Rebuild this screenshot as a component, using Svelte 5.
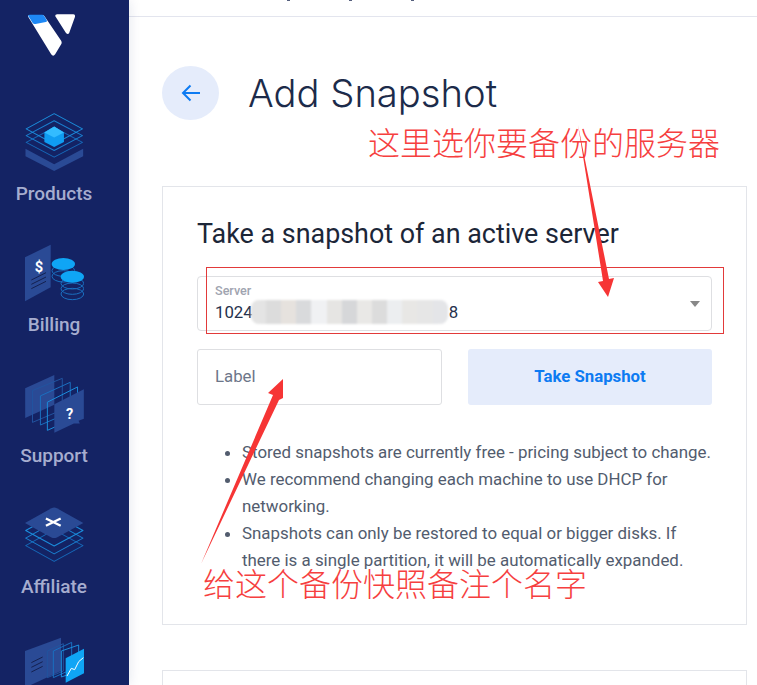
<script>
	const blurBlocks = [
		'#e4e4e4', '#dcdcdc', '#e6e2de', '#d9dadc', '#f0f1f3', '#e6e5e3',
		'#d6d7d9', '#e9e8e6', '#dcdcdc', '#eceef0', '#e8e7e5', '#e6e6e6', '#e4e5e8'
	];

	const notes = [
		'Stored snapshots are currently free - pricing subject to change.',
		'We recommend changing each machine to use DHCP for networking.',
		'Snapshots can only be restored to equal or bigger disks. If there is a single partition, it will be automatically expanded.'
	];
</script>

<div class="app">
	<aside class="sidebar">
		<svg class="logo" viewBox="85 42 140 126" aria-hidden="true">
			<path d="M85 50 Q84 45 90 45 L128 45 Q132 45 134 49 L184 122 Q187 128 184 133 L166 163 Q160 171 154 163 Z" fill="#fff" />
			<path d="M85 47 Q85 44 90 44 L127 44 Q131 44 133 48 L141 61 Q143 66 138 66 L107 72 Q102 73 99 70 Z" fill="#1e88f5" />
			<path d="M166 48 Q166 43 172 43 L220 43 Q228 44 225 52 L208 99 Q204 105 198 98 Z" fill="#fff" />
		</svg>

		<nav>
			<a class="item" href="#products">
				<svg viewBox="78 338 172 172" aria-hidden="true">
					<path d="M78 444 L163 490 L249 444 L249 466 L163 510 L78 466 Z" fill="#2a4a95" />
					<g fill="none" stroke-width="3" stroke-linejoin="round">
						<path d="M80 425 L163 381 L247 425 L163 469 Z" stroke="#1668b8" />
						<path d="M80 405 L163 361 L247 405 L163 449 Z" stroke="#1a7fd0" />
						<path d="M80 385 L163 340 L247 385 L163 430 Z" stroke="#1b8ddc" />
					</g>
					<path d="M134 396 L163 378 L192 396 L192 424 L163 439 L134 424 Z" fill="#0f9df2" />
					<path d="M134 396 L163 378 L192 396 L163 411 Z" fill="#33bcff" />
				</svg>
				<span>Products</span>
			</a>

			<a class="item" href="#billing">
				<svg viewBox="75 732 177 170" aria-hidden="true">
					<path d="M75 770 L152 732 L152 860 L75 902 Z" fill="#2a4a95" />
					<text x="104" y="814" class="glyph">$</text>
					<path d="M94 838 L138 816 M94 851 L138 829 M94 864 L138 842" stroke="#14204f" stroke-width="3" />
					<g fill="none" stroke="#1a6fc0" stroke-width="3">
						<ellipse cx="190" cy="810" rx="34" ry="17" />
						<ellipse cx="190" cy="827" rx="34" ry="17" />
						<ellipse cx="217" cy="848" rx="34" ry="17" />
						<ellipse cx="217" cy="864" rx="34" ry="17" />
						<ellipse cx="217" cy="880" rx="34" ry="17" />
					</g>
					<ellipse cx="190" cy="790" rx="35" ry="18" fill="#0fa5f5" />
					<ellipse cx="217" cy="828" rx="35" ry="18" fill="#0fa5f5" />
				</svg>
				<span>Billing</span>
			</a>

			<a class="item" href="#support">
				<svg viewBox="75 100 177 175" aria-hidden="true">
					<path d="M75 140 L163 100 L163 190 L75 230 Z" fill="#2a4a95" />
					<g fill="none" stroke-width="3">
						<path d="M97 147 L187 110 L187 205 L97 243 Z" stroke="#21549f" />
						<path d="M121 163 L211 122 L211 212 L121 251 Z" stroke="#1a6fc0" />
						<path d="M142 182 L233 136 L233 226 L142 267 Z" stroke="#1b8ddc" />
					</g>
					<path d="M163 188 L252 143 L252 232 L236 238 L240 246 L222 246 L163 274 Z" fill="#2a4a95" />
					<text x="198" y="232" class="glyph">?</text>
				</svg>
				<span>Support</span>
			</a>

			<a class="item" href="#affiliate">
				<svg viewBox="78 500 172 162" aria-hidden="true">
					<g fill="none" stroke-width="3" stroke-linejoin="round">
						<path d="M80 612 L163 566 L247 612 L163 658 Z" stroke="#1668b8" />
						<path d="M80 590 L163 544 L247 590 L163 636 Z" stroke="#1a7fd0" />
						<path d="M80 568 L163 522 L247 568 L163 613 Z" stroke="#1b8ddc" />
					</g>
					<path d="M78 546 L155 503 Q163 499 171 503 L248 546 L171 588 Q163 592 155 588 Z" fill="#2a4a95" />
					<path d="M139 533 L182 554 M182 533 L139 554" stroke="#fff" stroke-width="7" />
				</svg>
				<span>Affiliate</span>
			</a>

			<a class="item" href="#reports">
				<svg viewBox="75 885 177 170" aria-hidden="true">
					<path d="M75 925 L183 885 L183 985 L75 1035 Z" fill="#2a4a95" />
					<path d="M94 960 L128 943 M94 974 L128 957 M94 988 L128 971" stroke="#14204f" stroke-width="3" />
					<g fill="none" stroke-width="3">
						<path d="M142 925 L190 903 L190 985 L142 1005 Z" stroke="#21549f" />
						<path d="M160 925 L215 899 L215 980 L160 1005 Z" stroke="#1a6fc0" />
						<path d="M184 925 L236 907 L236 985 L184 1003 Z" stroke="#1b8ddc" />
					</g>
					<path d="M197 947 L252 918 L252 992 L197 1020 Z" fill="#0fa5f5" />
					<path d="M201 1000 L214 977 L224 981 L236 957 L250 945" fill="none" stroke="#fff" stroke-width="3" />
				</svg>
			</a>
		</nav>
	</aside>

	<main class="main">
		<!-- only the descenders of the cut-off header text show -->
		<div class="topbar"><i></i><i></i><i></i></div>

		<div class="content">
			<header class="page-head">
				<button class="back" aria-label="Back">
					<svg width="20" height="20" viewBox="0 0 20 20" fill="none" stroke="#0d7bf2" stroke-width="2">
						<path d="M19 10 H2 M9.500 2.500 L2 10 L9.500 17.500" />
					</svg>
				</button>
				<h1>Add Snapshot</h1>
			</header>

			<section class="card">
				<h2>Take a snapshot of an active server</h2>

				<div class="select">
					<span class="select-label">Server</span>
					<span class="select-value">
						1024<span class="blur">
							{#each blurBlocks as color}
								<i style="background: {color}"></i>
							{/each}
						</span>8
					</span>
					<span class="caret"></span>
				</div>

				<div class="row">
					<input class="label-input" placeholder="Label" />
					<button class="take">Take Snapshot</button>
				</div>

				<ul>
					{#each notes as note}
						<li>{note}</li>
					{/each}
				</ul>
			</section>

			<section class="card second"></section>
		</div>
	</main>

	<!-- red annotations drawn on top of the screenshot -->
	<div class="markup">
		<div class="red-box"></div>
		<span class="note note-top">这里选你要备份的服务器</span>
		<span class="note note-bottom">给这个备份快照备注个名字</span>
		<svg class="arrows" width="757" height="685" aria-hidden="true">
			<polygon points="578,125 603,281 598,282 608,297 614,278 609,279" fill="#f63535" />
			<polygon points="201,564 273,395 268,393 283,379 283,398 279,400" fill="#f63535" />
		</svg>
	</div>
</div>

<style>
	:global(body) {
		margin: 0;
		background: #fff;
		overflow: hidden;
	}

	.app {
		position: relative;
		display: flex;
		width: 757px;
		height: 685px;
		overflow: hidden;
		font-family: Roboto, 'Liberation Sans', sans-serif;
	}

	.sidebar {
		flex: 0 0 129px;
		box-sizing: border-box;
		padding-right: 21px;
		display: flex;
		flex-direction: column;
		align-items: center;
		background: #142364;
		box-shadow: 0 0 12px rgba(20, 35, 100, 0.12);
		z-index: 1;
	}

	.logo {
		flex: none;
		width: 47px;
		height: 42px;
		margin-top: 14px;
		margin-bottom: 57px;
		margin-left: -6px;
	}

	nav {
		display: flex;
		flex-direction: column;
		gap: 38px;
	}

	.item {
		display: flex;
		flex-direction: column;
		align-items: center;
		gap: 11px;
		text-decoration: none;
	}

	.item svg {
		flex: none;
		width: 59px;
		height: 58px;
		display: block;
	}

	.item span {
		font-size: 19px;
		line-height: 24px;
		font-weight: 500;
		color: #a6adcf;
	}

	.glyph {
		font-family: Roboto, sans-serif;
		font-size: 44px;
		font-weight: 700;
		fill: #fff;
	}

	.main {
		flex: 1;
		min-width: 0;
	}

	.topbar {
		height: 16px;
		border-bottom: 1px solid #e3e5ee;
		display: flex;
		align-items: flex-start;
		gap: 59px;
		padding-left: 158px;
	}

	.topbar i {
		width: 3px;
		height: 1px;
		background: #56607e;
	}

	.content {
		padding: 49px 10px 0 33px;
	}

	.page-head {
		display: flex;
		align-items: center;
		gap: 29px;
		margin-bottom: 66px;
	}

	.back {
		width: 57px;
		height: 54px;
		padding: 0;
		border: none;
		border-radius: 50%;
		background: #e5ecfb;
		display: flex;
		align-items: center;
		justify-content: center;
	}

	h1 {
		margin: 0;
		font-family: Inter, sans-serif;
		font-size: 38.200px;
		line-height: 54px;
		font-weight: 300;
		color: #1c2b4a;
	}

	.card {
		height: 437px;
		border: 1px solid #e3e5ea;
		padding: 0 34px;
	}

	.second {
		margin-top: 45px;
		height: 60px;
	}

	h2 {
		margin: 30px 0 25px;
		font-size: 26.900px;
		line-height: 34px;
		font-weight: 400;
		color: #1c2638;
	}

	.select {
		position: relative;
		box-sizing: border-box;
		height: 55px;
		border: 1px solid #dedfe2;
		border-radius: 4px;
		padding: 7px 17px 0;
	}

	.select-label {
		display: block;
		font-size: 12.600px;
		line-height: 14px;
		font-weight: 500;
		color: #a0a4b0;
	}

	.select-value {
		display: flex;
		align-items: center;
		margin-top: 2px;
		font-size: 16.800px;
		line-height: 24px;
		color: #26324d;
	}

	.blur {
		display: flex;
		width: 197px;
		height: 24px;
		margin: 0 1px 0 -2px;
		overflow: hidden;
		border-radius: 8px;
		filter: blur(1px);
	}

	.blur i {
		flex: 1;
	}

	.caret {
		position: absolute;
		right: 11px;
		top: 24px;
		border-left: 5px solid transparent;
		border-right: 5px solid transparent;
		border-top: 6px solid #888;
	}

	.row {
		display: flex;
		justify-content: space-between;
		margin-top: 18px;
	}

	.label-input {
		box-sizing: border-box;
		width: 245px;
		height: 56px;
		border: 1px solid #dedfe2;
		border-radius: 3px;
		padding: 0 18px 2px 17px;
		font-family: inherit;
		font-size: 16.800px;
		background: #fff;
	}

	.label-input::placeholder {
		color: #6d7689;
		opacity: 1;
	}

	.take {
		width: 244px;
		height: 56px;
		border: none;
		border-radius: 3px;
		padding: 0 0 2px;
		background: #e5ecfb;
		font-family: inherit;
		font-size: 16.800px;
		font-weight: 700;
		color: #0d7bf2;
	}

	ul {
		margin: 34px 0 0;
		padding: 0 0 0 45px;
		font-size: 16.900px;
		line-height: 27px;
		color: #525c6e;
	}

	.markup {
		position: absolute;
		inset: 0;
		z-index: 2;
		pointer-events: none;
	}

	.arrows {
		position: absolute;
		left: 0;
		top: 0;
	}

	.red-box {
		position: absolute;
		left: 206px;
		top: 267px;
		width: 516px;
		height: 65px;
		border: 1px solid #e23a3a;
	}

	.note {
		position: absolute;
		font-family: 'Noto Sans CJK SC', sans-serif;
		font-size: 32px;
		line-height: 28px;
		font-weight: 300;
		color: #f63f3f;
		white-space: nowrap;
	}

	.note-top {
		left: 368px;
		top: 127px;
	}

	.note-bottom {
		left: 203px;
		top: 568px;
	}
</style>
